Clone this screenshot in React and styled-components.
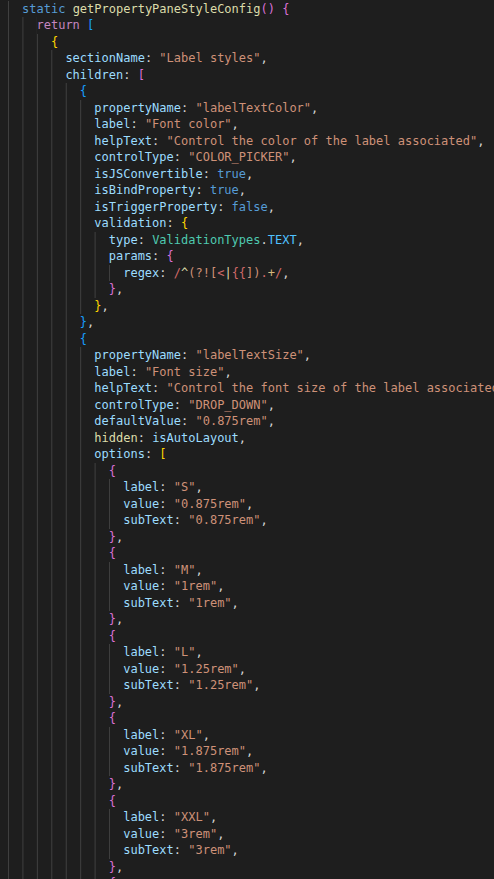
import React from 'react';
import styled, { createGlobalStyle } from 'styled-components';

const GlobalStyle = createGlobalStyle`
  html, body {
    margin: 0;
    padding: 0;
    background: #1e1e1e;
  }
`;

// DejaVu Sans Mono advance at 12px
const CHAR = 7.224;

const BRACKETS = ['#ffd700', '#da70d6', '#179fff'];

const SOURCE = `  static getPropertyPaneStyleConfig() {
    return [
      {
        sectionName: "Label styles",
        children: [
          {
            propertyName: "labelTextColor",
            label: "Font color",
            helpText: "Control the color of the label associated",
            controlType: "COLOR_PICKER",
            isJSConvertible: true,
            isBindProperty: true,
            isTriggerProperty: false,
            validation: {
              type: ValidationTypes.TEXT,
              params: {
                regex: /^(?![<|{{]).+/,
              },
            },
          },
          {
            propertyName: "labelTextSize",
            label: "Font size",
            helpText: "Control the font size of the label associated",
            controlType: "DROP_DOWN",
            defaultValue: "0.875rem",
            hidden: isAutoLayout,
            options: [
              {
                label: "S",
                value: "0.875rem",
                subText: "0.875rem",
              },
              {
                label: "M",
                value: "1rem",
                subText: "1rem",
              },
              {
                label: "L",
                value: "1.25rem",
                subText: "1.25rem",
              },
              {
                label: "XL",
                value: "1.875rem",
                subText: "1.875rem",
              },
              {
                label: "XXL",
                value: "3rem",
                subText: "3rem",
              },
              {`;

const REGEX = '/^(?![<|{{]).+/';
const REGEX_PARTS = [
  ['/', '#d16969'],
  ['^', '#dcdcaa'],
  ['(?!', '#ce9178'],
  ['[', '#ce9178'],
  ['<', '#d16969'],
  ['|', '#dcdcaa'],
  ['{{', '#d16969'],
  [']', '#ce9178'],
  [')', '#ce9178'],
  ['.', '#d16969'],
  ['+', '#d7ba7d'],
  ['/', '#d16969'],
];

function identColor(name, next) {
  if (name === 'static' || name === 'true' || name === 'false') return '#569cd6';
  if (name === 'return') return '#c586c0';
  if (name === 'ValidationTypes') return '#4ec9b0';
  if (name === 'TEXT') return '#4fc1ff';
  if (name === 'hidden') return '#dcdcaa';
  if (next === '(') return '#dcdcaa';
  return '#9cdcfe';
}

function tokenize(src, state) {
  const out = [];
  let i = 0;
  while (i < src.length) {
    const rest = src.slice(i);
    const c = rest[0];
    let m;
    if (rest.startsWith(REGEX)) {
      REGEX_PARTS.forEach(p => out.push(p));
      i += REGEX.length;
    } else if ((m = rest.match(/^"[^"]*"/))) {
      out.push([m[0], '#ce9178']);
      i += m[0].length;
    } else if ((m = rest.match(/^[A-Za-z_$][\w$]*/))) {
      const next = rest.slice(m[0].length).trimStart()[0];
      out.push([m[0], identColor(m[0], next)]);
      i += m[0].length;
    } else if ('([{'.includes(c)) {
      out.push([c, BRACKETS[state.depth % 3]]);
      state.depth++;
      i++;
    } else if (')]}'.includes(c)) {
      state.depth--;
      out.push([c, BRACKETS[state.depth % 3]]);
      i++;
    } else {
      out.push([c, '#d4d4d4']);
      i++;
    }
  }
  return out;
}

const Editor = styled.div`
  width: 494px;
  height: 879px;
  overflow: hidden;
  box-sizing: border-box;
  padding: 0.75px 0 0 7.6px;
  background: #1e1e1e;
  color: #d4d4d4;
  font-family: "DejaVu Sans Mono", "Liberation Mono", monospace;
  font-size: 12px;
  line-height: 16.5px;
`;

const Line = styled.div`
  display: flex;
  height: 16.5px;
  white-space: pre;
`;

const Indent = styled.span`
  flex: none;
  background-image: linear-gradient(to right, #404040 1px, transparent 1px);
  background-size: ${CHAR * 2}px 100%;
  background-repeat: repeat-x;
`;

const Code = styled.span`
  flex: none;
`;

const Tok = styled.span`
  color: ${p => p.$c};
`;

export default function App() {
  const state = { depth: 1 };
  const lines = SOURCE.split('\n').map(raw => {
    const lead = raw.match(/^ */)[0];
    return { lead, tokens: tokenize(raw.slice(lead.length), state) };
  });

  return (
    <>
      <GlobalStyle />
      <Editor>
        {lines.map((l, n) => (
          <Line key={n}>
            <Indent>{l.lead}</Indent>
            <Code>
              {l.tokens.map(([text, color], k) => (
                <Tok key={k} $c={color}>{text}</Tok>
              ))}
            </Code>
          </Line>
        ))}
      </Editor>
    </>
  );
}
